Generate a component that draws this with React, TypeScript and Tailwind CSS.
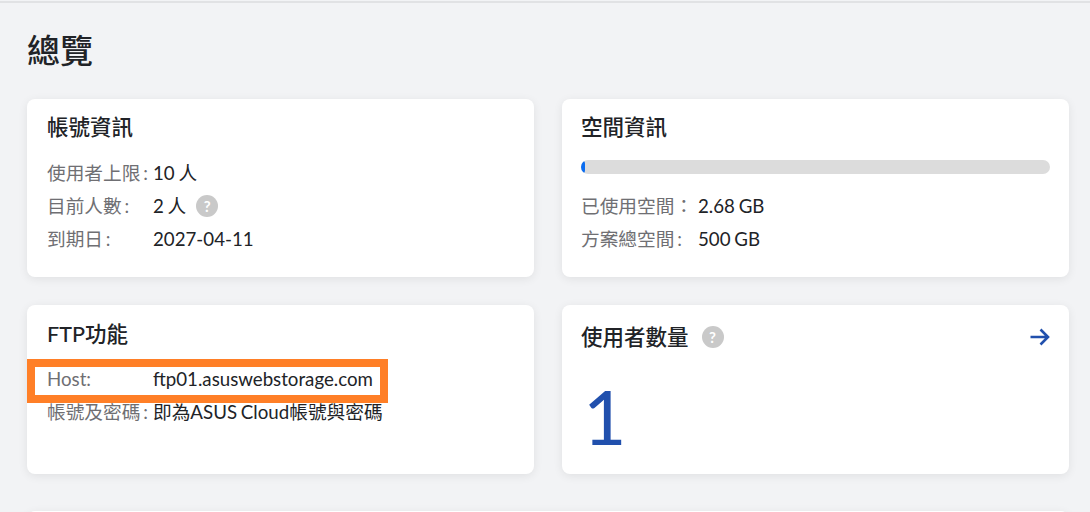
import React from "react";

const font = { fontFamily: '"Lato", "Noto Sans CJK TC", sans-serif' };

function Help({ className = "" }: { className?: string }) {
  return (
    <span className={"inline-flex h-[22px] w-[22px] items-center justify-center rounded-full bg-[#c9c9c9] text-[15px] font-bold leading-none text-white " + className}>?</span>
  );
}

function Row({ label, children, labelW = "w-[106px]" }: { label: string; children: React.ReactNode; labelW?: string }) {
  return (
    <div className="flex h-[33px] items-center whitespace-nowrap text-[18.7px] [word-spacing:-1px]">
      <span className={labelW + " shrink-0 text-[#6f6f73] [word-spacing:-2px]"}>{label}</span>
      <span className="flex items-center text-[#212327]">{children}</span>
    </div>
  );
}

function Title({ children }: { children: React.ReactNode }) {
  return <h2 className="text-[21.5px] font-medium leading-[30px] text-[#212327]">{children}</h2>;
}

export default function App() {
  return (
    <div style={font} className="relative h-[512px] w-[1090px] overflow-hidden bg-[#f2f3f5]">
      <div className="h-px bg-[#f2f3f5]" />
      <div className="h-[2px] bg-[#e1e2e4]" />
      <div className="pl-[27px] pr-[21px] pt-[27px]">
        <h1 className="h-[69px] text-[33px] font-medium leading-[40px] text-[#212327]">總覽</h1>
        <div className="grid grid-cols-[507px_507px] gap-x-[28px] gap-y-[28px]">
          <div className="h-[178px] rounded-lg bg-white pl-5 pr-5 pt-[13px] shadow-[0_2px_10px_rgba(0,0,0,0.08)]">
            <Title>帳號資訊</Title>
            <div className="mt-[15px]">
              <Row label="使用者上限 :">10 人</Row>
              <Row label="目前人數 :">2 人<Help className="ml-[10px]" /></Row>
              <Row label="到期日 :">2027-04-11</Row>
            </div>
          </div>
          <div className="h-[178px] rounded-lg bg-white px-[19px] pt-[13px] shadow-[0_2px_10px_rgba(0,0,0,0.08)]">
            <Title>空間資訊</Title>
            <div className="mt-[18px] h-[14px] overflow-hidden rounded-full bg-[#dcdcdc]">
              <div className="h-full w-[4px] rounded-r-full bg-[#0a6cf0]" />
            </div>
            <div className="mt-[16px]">
              <Row label="已使用空間：" labelW="w-[117px]">2.68 GB</Row>
              <Row label="方案總空間 :" labelW="w-[117px]">500 GB</Row>
            </div>
          </div>
          <div className="h-[169px] rounded-lg bg-white px-5 pt-[14px] shadow-[0_2px_10px_rgba(0,0,0,0.08)]">
            <Title>FTP功能</Title>
            <div className="mt-[14px]">
              <Row label="Host:">ftp01.asuswebstorage.com</Row>
              <Row label="帳號及密碼 :">即為ASUS Cloud帳號與密碼</Row>
            </div>
          </div>
          <div className="h-[169px] rounded-lg bg-white px-[19px] pt-[17px] shadow-[0_2px_10px_rgba(0,0,0,0.08)]">
            <div className="flex items-center">
              <Title>使用者數量</Title>
              <Help className="ml-[13px]" />
              <svg className="ml-auto" width="21" height="18" viewBox="0 0 21 18" fill="none" stroke="#2150ad" strokeWidth="2.6">
                <path d="M1.5 9H19M11.5 1.5L19 9L11.5 16.5" />
              </svg>
            </div>
            <div className="ml-[2px] mt-[24px] text-[75px] leading-[80px] text-[#2150ad]">1</div>
          </div>
        </div>
        <div className="mt-[37px] h-[20px] rounded-lg bg-white shadow-[0_2px_10px_rgba(0,0,0,0.08)]" />
      </div>
      <div className="absolute left-[27px] top-[359px] h-[44px] w-[361px] border-[8px] border-[#ff7f27]" />
    </div>
  );
}
